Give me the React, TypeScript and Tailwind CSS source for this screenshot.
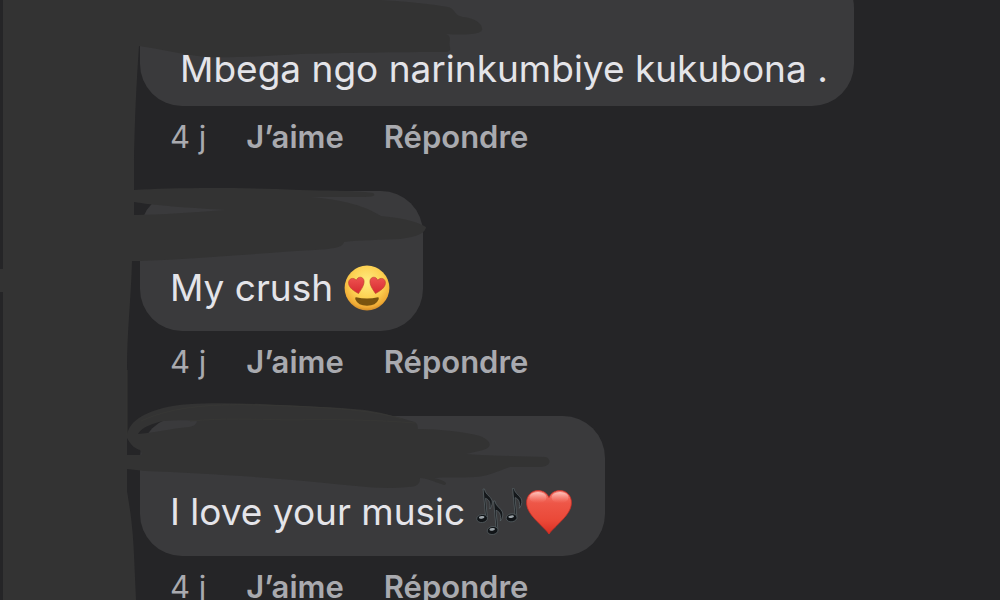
import type { ReactNode } from "react";

function HeartEyes() {
  return (
    <svg viewBox="0 0 46 46" className="h-[46px] w-[46px] shrink-0" role="img" aria-label="😍">
      <defs>
        <radialGradient id="face" cx="50%" cy="36%" r="66%">
          <stop offset="0" stopColor="#ffec80" />
          <stop offset="0.55" stopColor="#fdd152" />
          <stop offset="0.86" stopColor="#f0ab35" />
          <stop offset="1" stopColor="#c98222" />
        </radialGradient>
        <linearGradient id="eye" x1="0" y1="0" x2="0" y2="1">
          <stop offset="0" stopColor="#ee5350" />
          <stop offset="1" stopColor="#d62a30" />
        </linearGradient>
      </defs>
      <circle cx="23" cy="23" r="22.4" fill="url(#face)" />
      <path
        d="M14.500 28.500C10 26 5 23 4.600 18.300C4.300 13.300 9.500 11.800 12.300 15.300C13.800 11 19.400 11.300 20 15.800C20.400 20 17.500 24 14.500 28.500Z"
        fill="url(#eye)"
        stroke="#c0482e"
        strokeWidth="0.7"
      />
      <path
        d="M31.500 28.500C28.500 24 25.600 20 26 15.800C26.600 11.300 32.200 11 33.700 15.300C36.500 11.800 41.700 13.300 41.400 18.300C41 23 36 26 31.500 28.500Z"
        fill="url(#eye)"
        stroke="#c0482e"
        strokeWidth="0.7"
      />
      <path d="M12 32.300Q23 34.700 34 32.300Q35.300 32.300 34.600 34.500Q32 40.700 23 40.700Q14 40.700 11.400 34.500Q10.700 32.300 12 32.300Z" fill="#7a540f" />
    </svg>
  );
}

function Note({ x, y }: { x: number; y: number }) {
  return (
    <g transform={`translate(${x} ${y})`}>
      <path
        d="M6.600 0.500H8C8.600 6.500 16.400 8.500 15.800 14.500C15.500 17 14.600 19 13.300 20.500C14.200 15.500 13.200 11 9 9.800L10.800 28.500L9.200 28.800Z"
        fill="#15181b"
        stroke="#5d676c"
        strokeWidth="0.7"
      />
      <ellipse cx="5.600" cy="30" rx="5.400" ry="4" transform="rotate(-8 5.600 30)" fill="#111417" stroke="#586166" strokeWidth="0.7" />
      <ellipse cx="5.200" cy="28.900" rx="2.800" ry="1.300" transform="rotate(-8 5.200 28.900)" fill="#9aa2a7" />
    </g>
  );
}

function MusicNotes() {
  return (
    <svg viewBox="0 0 48 48" className="h-12 w-12 shrink-0" role="img" aria-label="🎶">
      <Note x={0.5} y={0.5} />
      <Note x={30} y={-0.2} />
      <Note x={11} y={12.5} />
    </svg>
  );
}

function RedHeart() {
  return (
    <svg viewBox="0 0 46 46" className="h-[46px] w-[46px] shrink-0" role="img" aria-label="❤️">
      <defs>
        <linearGradient id="heart" x1="0" y1="0" x2="0" y2="1">
          <stop offset="0" stopColor="#f4796f" />
          <stop offset="0.3" stopColor="#ee5647" />
          <stop offset="0.7" stopColor="#ea4837" />
          <stop offset="1" stopColor="#d92e22" />
        </linearGradient>
        <linearGradient id="shine" x1="0" y1="0" x2="0" y2="1">
          <stop offset="0" stopColor="#ffd2cc" stopOpacity="0.85" />
          <stop offset="1" stopColor="#ff8a7d" stopOpacity="0" />
        </linearGradient>
      </defs>
      <path
        d="M23 45C21.500 42.500 17 38.500 11.500 32.800C5.500 26.700 0.600 21 0.600 13.500C0.600 6.500 5.500 1.500 12 1.500C17 1.500 21 4 23 8.500C25 4 29 1.500 34 1.500C40.500 1.500 45.400 6.500 45.400 13.500C45.400 21 40.500 26.700 34.500 32.800C29 38.500 24.500 42.500 23 45Z"
        fill="url(#heart)"
        stroke="#cf2f26"
        strokeWidth="0.8"
      />
      <ellipse cx="12" cy="8.500" rx="8.500" ry="5.500" fill="url(#shine)" />
      <ellipse cx="34" cy="8.500" rx="8.500" ry="5.500" fill="url(#shine)" />
    </svg>
  );
}

function Scribbles() {
  return (
    <svg
      viewBox="0 0 600 600"
      className="pointer-events-none absolute top-0 left-0 h-[600px] w-[600px]"
      fill="#333333"
      fillRule="evenodd"
      aria-hidden="true"
    >
      <path
        d="M3 0H380C400 1 432 4 448 7C457 10 453 15 463 17C475 18 483 24 482 30C480 35 462 35 446 34C453 37 448 42 450 47C451 50 449 52 446 52C400 52 340 53 300 54C270 56 230 58 205 57C180 54 160 49 139 46
        C137 75 135 110 134 160V190C170 188 230 187 300 190C325 191 350 190 373 193C377 196 372 197 365 197H310C345 200 365 206 381 216C405 218 420 223 426 227C426 232 418 237 400 239C380 240 360 240 344 242C343 248 330 249 315 250C260 253 200 259 140 261H132
        C131 300 127 330 127 370V435C130 420 145 413 163 408C185 402 225 403 260 404C300 406 335 407 365 410C385 413 400 418 415 422C419 425 417 427 418 429C440 429 465 432 480 436C492 441 494 448 479 451L466 454C490 456 520 456 546 457C553 461 549 467 540 467H510C500 470 490 476 475 477C460 478 445 477 434 478C447 481 448 484 444 485C435 482 427 478 420 478C420 484 417 487 408 487C380 490 350 485 325 483C280 478 200 473 145 471L127 469V491C131 515 133 530 134 555L136 600H3V292H0V269H3Z
        M134 202C150 205 190 208 226 210C195 212 160 215 134 215Z
        M138 434C142 427 153 423 164 421C175 420 188 420 197 421C196 426 192 427 180 428C165 430 150 433 138 434Z
        M127 438C131 446 136 449 140 450C142 453 142 454 141 455H127Z"
      />
      <path
        d="M141 421C175 405 220 404 260 405C320 407 370 409 402 419M190 421C225 418 250 419 290 420C330 419 380 420 415 423M127 370V435"
        fill="none"
        stroke="#373735"
        strokeWidth="1"
      />
    </svg>
  );
}

function Comment({ text, emoji }: { text: string; emoji?: ReactNode }) {
  return (
    <li className="flex flex-col items-start">
      <div
        className={`flex h-[140px] items-end rounded-[42px] bg-[#3a3a3c] text-[37px] leading-[46px] whitespace-nowrap text-[#e4e4e9] ${
          emoji ? "pr-[33px] pb-5 pl-[30px]" : "pr-[26px] pb-[14px] pl-10"
        }`}
      >
        <p className="flex items-center gap-[11px]">
          {text}
          {emoji}
        </p>
      </div>
      <div className="flex h-[85px] items-start gap-10 pt-[13px] pl-[30px] text-[31px] leading-9 text-[#a9aaaf]">
        <time>4 j</time>
        <button type="button" className="font-semibold">
          J’aime
        </button>
        <button type="button" className="font-semibold">
          Répondre
        </button>
      </div>
    </li>
  );
}

export default function App() {
  return (
    <main className="relative h-screen overflow-hidden bg-[#252527] font-['Inter',sans-serif]">
      <ul className="-mt-[34px] pl-[140px]">
        <Comment text="Mbega ngo narinkumbiye kukubona ." />
        <Comment text="My crush" emoji={<HeartEyes />} />
        <Comment
          text="I love your music"
          emoji={
            <span className="flex items-center gap-0.5">
              <MusicNotes />
              <RedHeart />
            </span>
          }
        />
      </ul>
      <Scribbles />
    </main>
  );
}
